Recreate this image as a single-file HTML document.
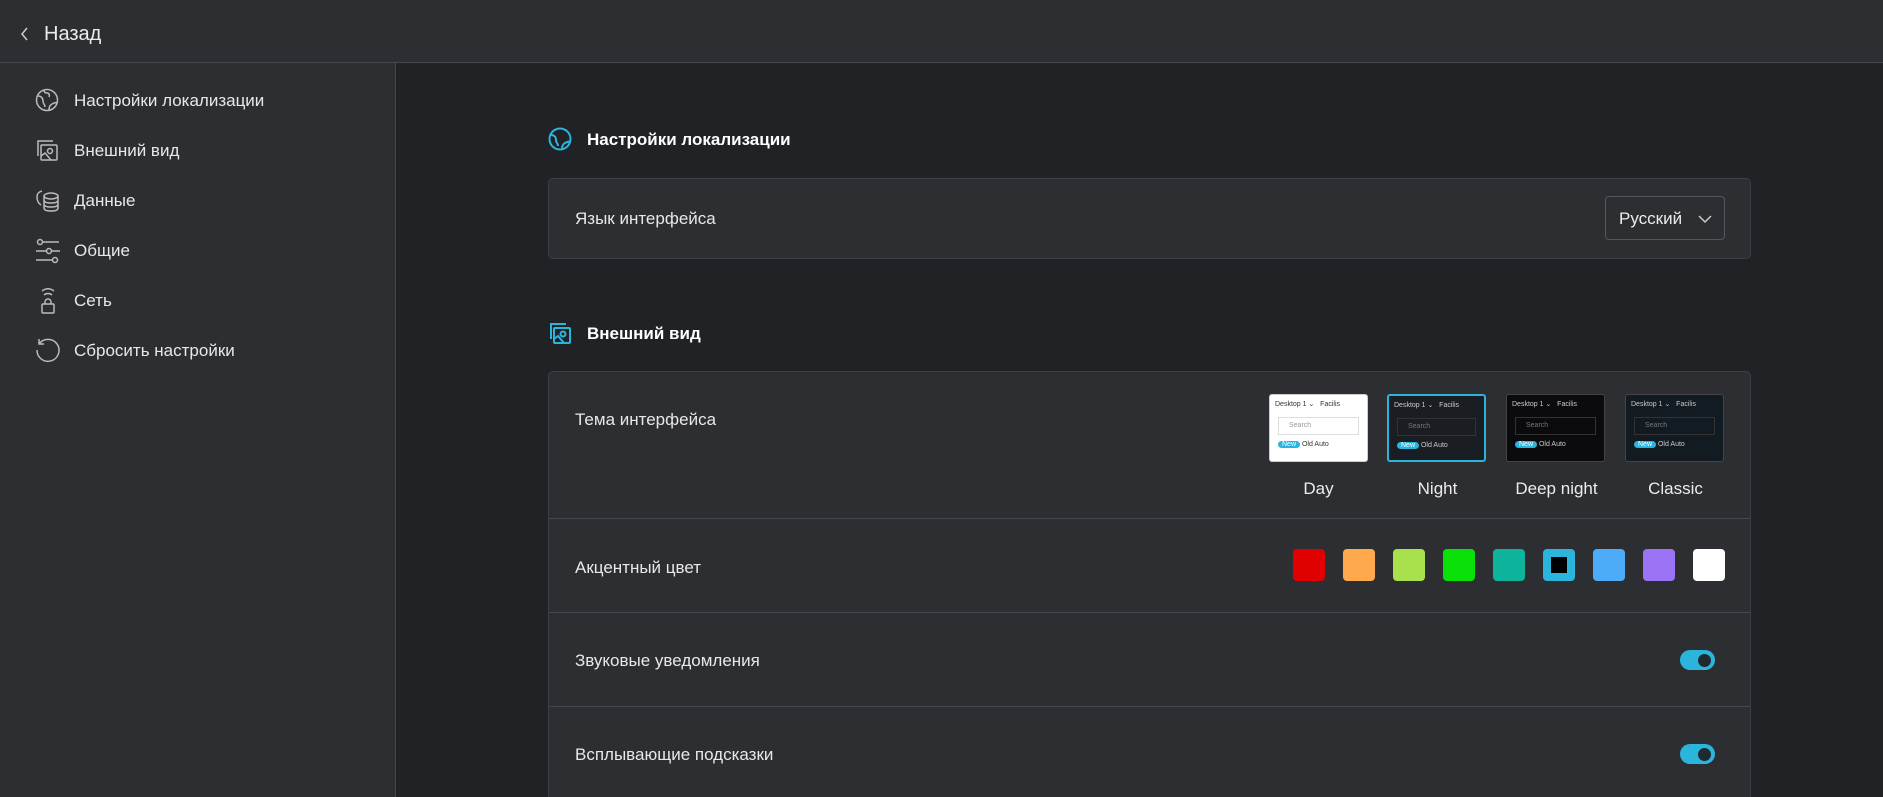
<!DOCTYPE html>
<html style="overflow:hidden;height:797px"><head><meta charset="utf-8"><style>
*{box-sizing:border-box;margin:0;padding:0}
body{width:1883px;height:797px;overflow:hidden;background:#212226;font-family:"Liberation Sans",sans-serif;color:#ececec;position:relative}
.top{position:absolute;left:0;top:0;width:1883px;height:63px;background:#2d2e32;border-bottom:1px solid #46474c}
.top span{position:absolute;left:44px;top:23px;font-size:20px}
.side{position:absolute;left:0;top:63px;width:396px;bottom:0;background:#2d2e32;border-right:1px solid #46474c}
.nav{position:absolute;left:74px;font-size:17px;color:#e8e8e8}
.ic{position:absolute}
.h{position:absolute;left:587px;font-size:17px;font-weight:bold;color:#fff}
.card{position:absolute;left:548px;width:1203px;background:#2d2e32;border:1px solid #3e3f44;border-radius:5px}
.lbl{position:absolute;left:26px;font-size:17px;color:#e8e8e8}
.row{position:absolute;left:0;width:100%;border-top:1px solid #46474c}
.sw{position:absolute;top:549px;width:32px;height:32px;border-radius:4px}
.tg{position:absolute;left:1131px;width:35px;height:20px;border-radius:10px;background:#2bb5dc}
.tg:after{content:"";position:absolute;right:4px;top:3.5px;width:13px;height:13px;border-radius:50%;background:#1e2a30}
.th{position:absolute;top:394px;width:99px;height:68px;border-radius:3px;overflow:hidden;font-size:7px}
.tl{position:absolute;top:479px;font-size:17px;width:119px;text-align:center}
</style></head><body>
<div class="top"><svg class="ic" style="left:20px;top:27px" width="10" height="14"><path d="M7 1L2 7l5 6" stroke="#ccc" stroke-width="1.5" fill="none"/></svg><span>Назад</span></div>
<div class="side">
<svg class="ic" style="left:35px;top:25px" width="24" height="24" fill="none" stroke="#bbb" stroke-width="1.5"><circle cx="12" cy="12" r="10.5"/><path d="M3 8c3 0 5 2 5 5s2 3 2 6M14 22c0-3 1-5 3-6s4-2 5-1M9 2c0 2 1 3 3 3s3 2 2 4"/></svg>
<div class="nav" style="top:28px">Настройки локализации</div>
<svg class="ic" style="left:35px;top:75px" width="24" height="24" fill="none" stroke="#bbb" stroke-width="1.5"><path d="M3 18V3h15"/><rect x="6" y="7" width="16" height="15" rx="1"/><circle cx="15" cy="13" r="2.5"/><path d="M6 18l4-3 6 7"/></svg>
<div class="nav" style="top:78px">Внешний вид</div>
<svg class="ic" style="left:35px;top:125px" width="26" height="26" fill="none" stroke="#bbb" stroke-width="1.5"><ellipse cx="16" cy="8" rx="7" ry="3"/><path d="M9 8v12c0 2 3 3 7 3s7-1 7-3V8M9 12c0 2 3 3 7 3s7-1 7-3M9 16c0 2 3 3 7 3s7-1 7-3M7 3C3 4 2 6 2 9s1 6 4 8"/></svg>
<div class="nav" style="top:128px">Данные</div>
<svg class="ic" style="left:35px;top:175px" width="26" height="26" fill="none" stroke="#bbb" stroke-width="1.5"><path d="M8 4h16M1 13h10M17 13h8M1 22h16"/><circle cx="5" cy="4" r="2.5"/><circle cx="14" cy="13" r="2.5"/><circle cx="20" cy="22" r="2.5"/></svg>
<div class="nav" style="top:178px">Общие</div>
<svg class="ic" style="left:39px;top:223px" width="18" height="28" fill="none" stroke="#bbb" stroke-width="1.5"><path d="M3 5c4-3 8-3 12 0M5 9c2-2 6-2 8 0"/><rect x="3" y="18" width="12" height="9" rx="1"/><path d="M6 18v-2a3 3 0 0 1 6 0v2"/></svg>
<div class="nav" style="top:228px">Сеть</div>
<svg class="ic" style="left:35px;top:274px" width="26" height="26" fill="none" stroke="#bbb" stroke-width="1.5"><path d="M4 7A11 11 0 1 1 2 13M4 2v5h5"/></svg>
<div class="nav" style="top:278px">Сбросить настройки</div>
</div>
<svg class="ic" style="left:548px;top:127px" width="24" height="24" fill="none" stroke="#2bb5dc" stroke-width="2"><circle cx="12" cy="12" r="10.5"/><path d="M3 8c3 0 5 2 5 5s2 3 2 6M14 22c0-3 1-5 3-6s4-2 5-1"/></svg>
<div class="h" style="top:130px">Настройки локализации</div>
<div class="card" style="top:178px;height:81px"><div class="lbl" style="top:30px">Язык интерфейса</div>
<div style="position:absolute;left:1056px;top:17px;width:120px;height:44px;border:1px solid #55565b;border-radius:4px;font-size:17px;padding:12px 0 0 13px">Русский<svg style="position:absolute;left:92px;top:18px" width="14" height="9"><path d="M1 1l6 6 6-6" stroke="#ccc" stroke-width="1.5" fill="none"/></svg></div></div>
<svg class="ic" style="left:548px;top:321px" width="24" height="24" fill="none" stroke="#2bb5dc" stroke-width="2"><path d="M3 18V3h15"/><rect x="6" y="7" width="16" height="15" rx="1"/><circle cx="15" cy="13" r="2.5"/><path d="M6 18l4-3 6 7"/></svg>
<div class="h" style="top:324px">Внешний вид</div>
<div class="card" style="top:371px;height:430px">
<div class="lbl" style="top:38px">Тема интерфейса</div>
<div class="row" style="top:146px"></div><div class="lbl" style="top:186px">Акцентный цвет</div>
<div class="row" style="top:240px"></div><div class="lbl" style="top:279px">Звуковые уведомления</div><div class="tg" style="top:278px"></div>
<div class="row" style="top:334px"></div><div class="lbl" style="top:373px">Всплывающие подсказки</div><div class="tg" style="top:372px"></div>
</div>
<div class="th" style="left:1269px;background:#fff;border:1px solid #ccc;color:#333"><div style="padding:5px">Desktop 1 ⌄ &nbsp; Facilis</div><div style="margin:4px 8px;height:18px;border:1px solid #ddd;padding:4px 10px;color:#999">Search</div><div style="padding:2px 8px"><span style="background:#2bb5dc;color:#fff;padding:0 4px;border-radius:5px">New</span> Old Auto</div></div>
<div class="th" style="left:1387px;background:#1a1d22;border:2px solid #2bb5dc;color:#ccc"><div style="padding:5px">Desktop 1 ⌄ &nbsp; Facilis</div><div style="margin:4px 8px;height:18px;border:1px solid #333;padding:4px 10px;color:#777">Search</div><div style="padding:2px 8px"><span style="background:#2bb5dc;color:#fff;padding:0 4px;border-radius:5px">New</span> Old Auto</div></div>
<div class="th" style="left:1506px;background:#0b0b0d;border:1px solid #444;color:#ccc"><div style="padding:5px">Desktop 1 ⌄ &nbsp; Facilis</div><div style="margin:4px 8px;height:18px;border:1px solid #333;padding:4px 10px;color:#777">Search</div><div style="padding:2px 8px"><span style="background:#2bb5dc;color:#fff;padding:0 4px;border-radius:5px">New</span> Old Auto</div></div>
<div class="th" style="left:1625px;background:#121a22;border:1px solid #444;color:#ccc"><div style="padding:5px">Desktop 1 ⌄ &nbsp; Facilis</div><div style="margin:4px 8px;height:18px;border:1px solid #333;padding:4px 10px;color:#777">Search</div><div style="padding:2px 8px"><span style="background:#2bb5dc;color:#fff;padding:0 4px;border-radius:5px">New</span> Old Auto</div></div>
<div class="tl" style="left:1259px">Day</div><div class="tl" style="left:1378px">Night</div><div class="tl" style="left:1497px">Deep night</div><div class="tl" style="left:1616px">Classic</div>
<div class="sw" style="left:1293px;background:#e00000"></div>
<div class="sw" style="left:1343px;background:#ffa94d"></div>
<div class="sw" style="left:1393px;background:#a8e04e"></div>
<div class="sw" style="left:1443px;background:#08e008"></div>
<div class="sw" style="left:1493px;background:#0db39a"></div>
<div class="sw" style="left:1543px;background:#2bb5dc"><div style="position:absolute;left:8px;top:8px;width:16px;height:16px;background:#000"></div></div>
<div class="sw" style="left:1593px;background:#4dabf7"></div>
<div class="sw" style="left:1643px;background:#9b74f5"></div>
<div class="sw" style="left:1693px;background:#fff"></div>
</body></html>
